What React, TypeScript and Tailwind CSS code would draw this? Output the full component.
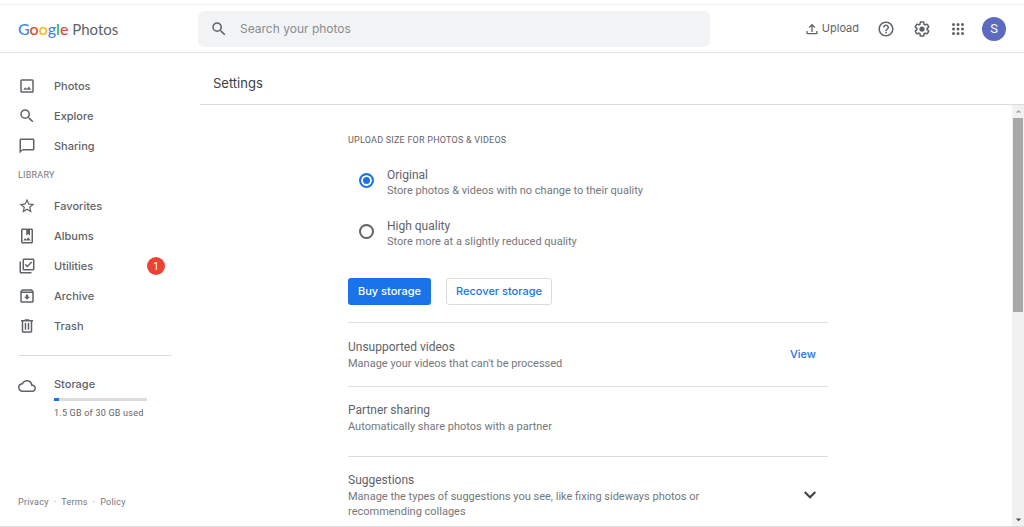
import type { ReactNode } from "react";
import {
  MdArrowDropDown,
  MdArrowDropUp,
  MdChatBubbleOutline,
  MdCloudQueue,
  MdHelpOutline,
  MdOutlineArchive,
  MdOutlineLibraryAddCheck,
  MdOutlinePhotoAlbum,
  MdSearch,
  MdStarBorder,
} from "react-icons/md";

const PhotoIcon = () => (
  <svg viewBox="0 0 24 24" className="size-[18px]" fill="currentColor">
    <path d="M19 5H5v14h14V5zm0-2a2 2 0 0 1 2 2v14a2 2 0 0 1-2 2H5a2 2 0 0 1-2-2V5a2 2 0 0 1 2-2h14z" />
    <path d="M14.500 12.500l-2.700 3.500-2-2.400L7 17h10.500z" />
  </svg>
);

const TrashIcon = () => (
  <svg viewBox="0 0 24 24" className="size-[18px]" fill="currentColor">
    <path d="M15 4V3H9v1H4v2h1v13c0 1.100.9 2 2 2h10c1.100 0 2-.9 2-2V6h1V4h-5zm2 15H7V6h10v13z" />
    <path d="M9 8h2v9H9zM13 8h2v9h-2z" />
  </svg>
);

const UploadIcon = () => (
  <svg viewBox="0 0 24 24" className="size-[14px]" fill="none" stroke="currentColor" strokeWidth="2.200">
    <path d="M12 17V4.500M7 9.500l5-5 5 5" />
    <path d="M3.500 15.500V19c0 .6.4 1 1 1h15c.6 0 1-.4 1-1v-3.500" />
  </svg>
);

const GearIcon = () => (
  <svg viewBox="0 0 24 24" className="size-[18px]" fill="currentColor">
    <path d="M13.850 22.250h-3.700c-.74 0-1.360-.54-1.450-1.270l-.27-1.890c-.27-.14-.53-.29-.79-.46l-1.800.72c-.7.260-1.470-.03-1.810-.65L2.200 15.530c-.35-.66-.2-1.440.36-1.880l1.530-1.190c-.01-.15-.02-.3-.02-.46 0-.150.010-.31.020-.46l-1.520-1.190c-.59-.45-.74-1.260-.37-1.880l1.850-3.190c.34-.62 1.110-.9 1.790-.63l1.810.73c.26-.17.520-.32.780-.46l.27-1.910c.09-.7.710-1.250 1.440-1.250h3.700c.74 0 1.360.54 1.450 1.270l.27 1.890c.27.140.53.290.79.460l1.800-.72c.71-.26 1.480.03 1.820.65l1.840 3.180c.36.66.2 1.440-.36 1.880l-1.520 1.190c.01.150.02.3.020.460s-.01.310-.02.460l1.520 1.190c.56.450.72 1.230.37 1.860l-1.860 3.220c-.34.620-1.110.9-1.800.63l-1.800-.72c-.26.170-.52.320-.78.460l-.27 1.910c-.1.680-.72 1.220-1.460 1.220zm-3.230-2h2.760l.37-2.550.53-.22c.44-.18.880-.44 1.340-.78l.45-.34 2.380.96 1.380-2.400-2.030-1.580.070-.56c.030-.26.060-.51.060-.78s-.03-.53-.06-.78l-.07-.56 2.030-1.580-1.390-2.400-2.390.96-.45-.35c-.42-.32-.87-.58-1.330-.77l-.52-.22-.37-2.550h-2.760l-.37 2.550-.53.210c-.44.190-.88.440-1.340.79l-.45.330-2.380-.95-1.390 2.390 2.030 1.580-.07.560a7 7 0 0 0-.06.790c0 .26.020.53.060.78l.07.560-2.030 1.580 1.380 2.400 2.390-.96.450.35c.43.330.86.580 1.330.77l.53.220.38 2.550z" />
    <circle cx="12" cy="12" r="3.500" />
  </svg>
);

const AppsIcon = () => (
  <svg viewBox="0 0 24 24" className="size-[18px]" fill="currentColor">
    {[6, 12, 18].map((y) => [6, 12, 18].map((x) => <circle key={`${x}-${y}`} cx={x} cy={y} r="2" />))}
  </svg>
);

type NavItem = { label: string; icon: ReactNode; count?: number };

const mainNav: NavItem[] = [
  { label: "Photos", icon: <PhotoIcon /> },
  { label: "Explore", icon: <MdSearch size={18} /> },
  { label: "Sharing", icon: <MdChatBubbleOutline size={18} /> },
];

const libraryNav: NavItem[] = [
  { label: "Favorites", icon: <MdStarBorder size={18} /> },
  { label: "Albums", icon: <MdOutlinePhotoAlbum size={18} /> },
  { label: "Utilities", icon: <MdOutlineLibraryAddCheck size={18} />, count: 1 },
  { label: "Archive", icon: <MdOutlineArchive size={18} /> },
  { label: "Trash", icon: <TrashIcon /> },
];

const NavList = ({ items }: { items: NavItem[] }) => (
  <ul>
    {items.map((item) => (
      <li key={item.label}>
        <a href="#" className="flex h-[30px] items-center pr-[35px] pl-[18px]">
          <span className="w-9">{item.icon}</span>
          <span className="flex-1 font-['Inter',sans-serif] text-[11px] font-medium">{item.label}</span>
          {item.count && (
            <span className="flex size-[18px] items-center justify-center rounded-full bg-[#ea4335] text-[10px] text-white">
              {item.count}
            </span>
          )}
        </a>
      </li>
    ))}
  </ul>
);

const Header = () => (
  <header className="flex h-12 shrink-0 items-center border-b border-[#e3e4e6]">
    <a href="#" className="w-[198px] shrink-0 pl-[18px] font-['Lato',sans-serif] text-[15px]">
      <span className="text-[16px] font-medium">
        <span className="text-[#4285f4]">G</span>
        <span className="text-[#ea4335]">o</span>
        <span className="text-[#fbbc04]">o</span>
        <span className="text-[#4285f4]">g</span>
        <span className="text-[#34a853]">l</span>
        <span className="text-[#ea4335]">e</span>
      </span>{" "}
      Photos
    </a>
    <form className="flex h-9 w-1/2 items-center gap-3 rounded-md bg-[#f1f3f4] px-3">
      <MdSearch size={18} />
      <input
        type="search"
        aria-label="Search your photos"
        placeholder="Search your photos"
        className="flex-1 bg-transparent font-['Inter',sans-serif] text-[12px] outline-none placeholder:text-[#8a8d91]"
      />
    </form>
    <div className="ml-auto flex items-center gap-[15px] pr-[18px]">
      <div className="flex items-center gap-[18px]">
        <button className="flex items-center gap-[3px] font-['Inter',sans-serif] text-[11px]">
          <UploadIcon />
          Upload
        </button>
        <button aria-label="Help">
          <MdHelpOutline size={18} />
        </button>
        <button aria-label="Settings">
          <GearIcon />
        </button>
        <button aria-label="Google apps">
          <AppsIcon />
        </button>
      </div>
      <button className="size-6 rounded-full bg-[#5c6bc0] text-[13px] text-white">S</button>
    </div>
  </header>
);

const Sidebar = () => (
  <aside className="flex w-[200px] shrink-0 flex-col pt-[18px]">
    <nav>
      <NavList items={mainNav} />
      <h2 className="flex h-[30px] items-center pl-[18px] text-[9px] tracking-wide text-[#74777b]">LIBRARY</h2>
      <NavList items={libraryNav} />
    </nav>
    <div className="mt-[14px] mr-7 ml-[18px] flex border-t border-[#dadce0] pt-5">
      <span className="w-9 shrink-0 pt-[1px]">
        <MdCloudQueue size={18} />
      </span>
      <div className="w-[93px]">
        <p className="font-['Inter',sans-serif] text-[11px] leading-4 font-medium">Storage</p>
        <div className="mt-1.5 h-[3px] bg-[#dadce0]">
          <div className="h-full w-[5%] bg-[#1a73e8]" />
        </div>
        <p className="mt-1 text-[9px] leading-4 tracking-wide whitespace-nowrap">1.5 GB of 30 GB used</p>
      </div>
    </div>
    <footer className="mt-auto flex gap-[5px] pb-[17px] pl-[18px] text-[9px] leading-[14px] tracking-wide text-[#74777b]">
      <a href="#">Privacy</a>
      <span>·</span>
      <a href="#">Terms</a>
      <span>·</span>
      <a href="#">Policy</a>
    </footer>
  </aside>
);

type QualityProps = { id: string; title: string; text: string; checked?: boolean };

const QualityOption = ({ id, title, text, checked }: QualityProps) => (
  <label htmlFor={id} className="flex items-start gap-[13px] pl-[11px]">
    <input
      type="radio"
      id={id}
      name="quality"
      defaultChecked={checked}
      className="mt-1.5 size-[15px] appearance-none rounded-full border-2 border-[#5f6368] checked:border-[#1a73e8] checked:bg-[#1a73e8] checked:shadow-[inset_0_0_0_2px_white]"
    />
    <span>
      <span className="block text-[12px] leading-4">{title}</span>
      <span className="block text-[11px] leading-4 text-[#74777b]">{text}</span>
    </span>
  </label>
);

const SettingText = ({ title, text }: { title: string; text: string }) => (
  <div>
    <h3 className="text-[12px] leading-[18px]">{title}</h3>
    <p className="text-[11px] leading-[15px] text-[#74777b]">{text}</p>
  </div>
);

const Scrollbar = () => (
  <div className="flex w-3 shrink-0 flex-col items-center bg-[#f1f1f1] text-[#505050]">
    <MdArrowDropUp size={13} className="shrink-0 text-[#a3a3a3]" />
    <div className="h-[46%] w-2.5 bg-[#a8a8a8]" />
    <MdArrowDropDown size={13} className="mt-auto shrink-0" />
  </div>
);

export default function App() {
  return (
    <div className="flex h-screen flex-col overflow-hidden border-b border-[#dadce0] bg-white font-['Roboto',sans-serif] text-[#5f6368]">
      <div className="h-[5px] shrink-0 border-b border-[#eceeef]" />
      <Header />
      <div className="flex min-h-0 flex-1">
        <Sidebar />
        <main className="flex min-w-0 flex-1 flex-col">
          <h1 className="flex h-[52px] shrink-0 items-center border-b border-[#dadce0] pt-2.5 pl-[13px] font-['Inter',sans-serif] text-[13px] text-[#3c4043]">
            Settings
          </h1>
          <div className="flex min-h-0 flex-1">
            <div className="flex-1 overflow-hidden pr-9">
              <div className="mx-auto max-w-[480px] pt-[29px]">
                <section>
                  <h2 className="text-[9px] leading-3 tracking-wide">UPLOAD SIZE FOR PHOTOS &amp; VIDEOS</h2>
                  <div className="mt-[21px] flex flex-col gap-[19px]">
                    <QualityOption
                      id="original"
                      title="Original"
                      text="Store photos & videos with no change to their quality"
                      checked
                    />
                    <QualityOption id="high" title="High quality" text="Store more at a slightly reduced quality" />
                  </div>
                  <div className="mt-7 flex gap-[15px] font-['Inter',sans-serif] text-[11px] font-medium">
                    <button className="h-[27px] rounded-[3px] bg-[#1a73e8] px-2.5 text-white">Buy storage</button>
                    <button className="h-[27px] rounded-[3px] border border-[#dadce0] px-[9px] text-[#1a73e8]">Recover storage</button>
                  </div>
                </section>
                <section className="mt-[17px] flex h-16 items-center justify-between border-t border-[#dadce0] pr-3">
                  <SettingText title="Unsupported videos" text="Manage your videos that can't be processed" />
                  <a href="#" className="font-['Inter',sans-serif] text-[11px] font-medium text-[#1a73e8]">
                    View
                  </a>
                </section>
                <section className="h-[70px] border-t border-[#dadce0] pt-[14px]">
                  <SettingText title="Partner sharing" text="Automatically share photos with a partner" />
                </section>
                <section className="flex items-center justify-between border-t border-[#dadce0] pt-[14px] pr-3">
                  <div className="max-w-[372px]">
                    <SettingText
                      title="Suggestions"
                      text="Manage the types of suggestions you see, like fixing sideways photos or recommending collages"
                    />
                  </div>
                  <button aria-label="Show suggestions">
                    <svg viewBox="0 0 12 8" className="h-2 w-3" fill="none" stroke="#3c4043" strokeWidth="2">
                      <path d="M.7 1 6 6.300 11.300 1" />
                    </svg>
                  </button>
                </section>
              </div>
            </div>
            <Scrollbar />
          </div>
        </main>
      </div>
    </div>
  );
}
